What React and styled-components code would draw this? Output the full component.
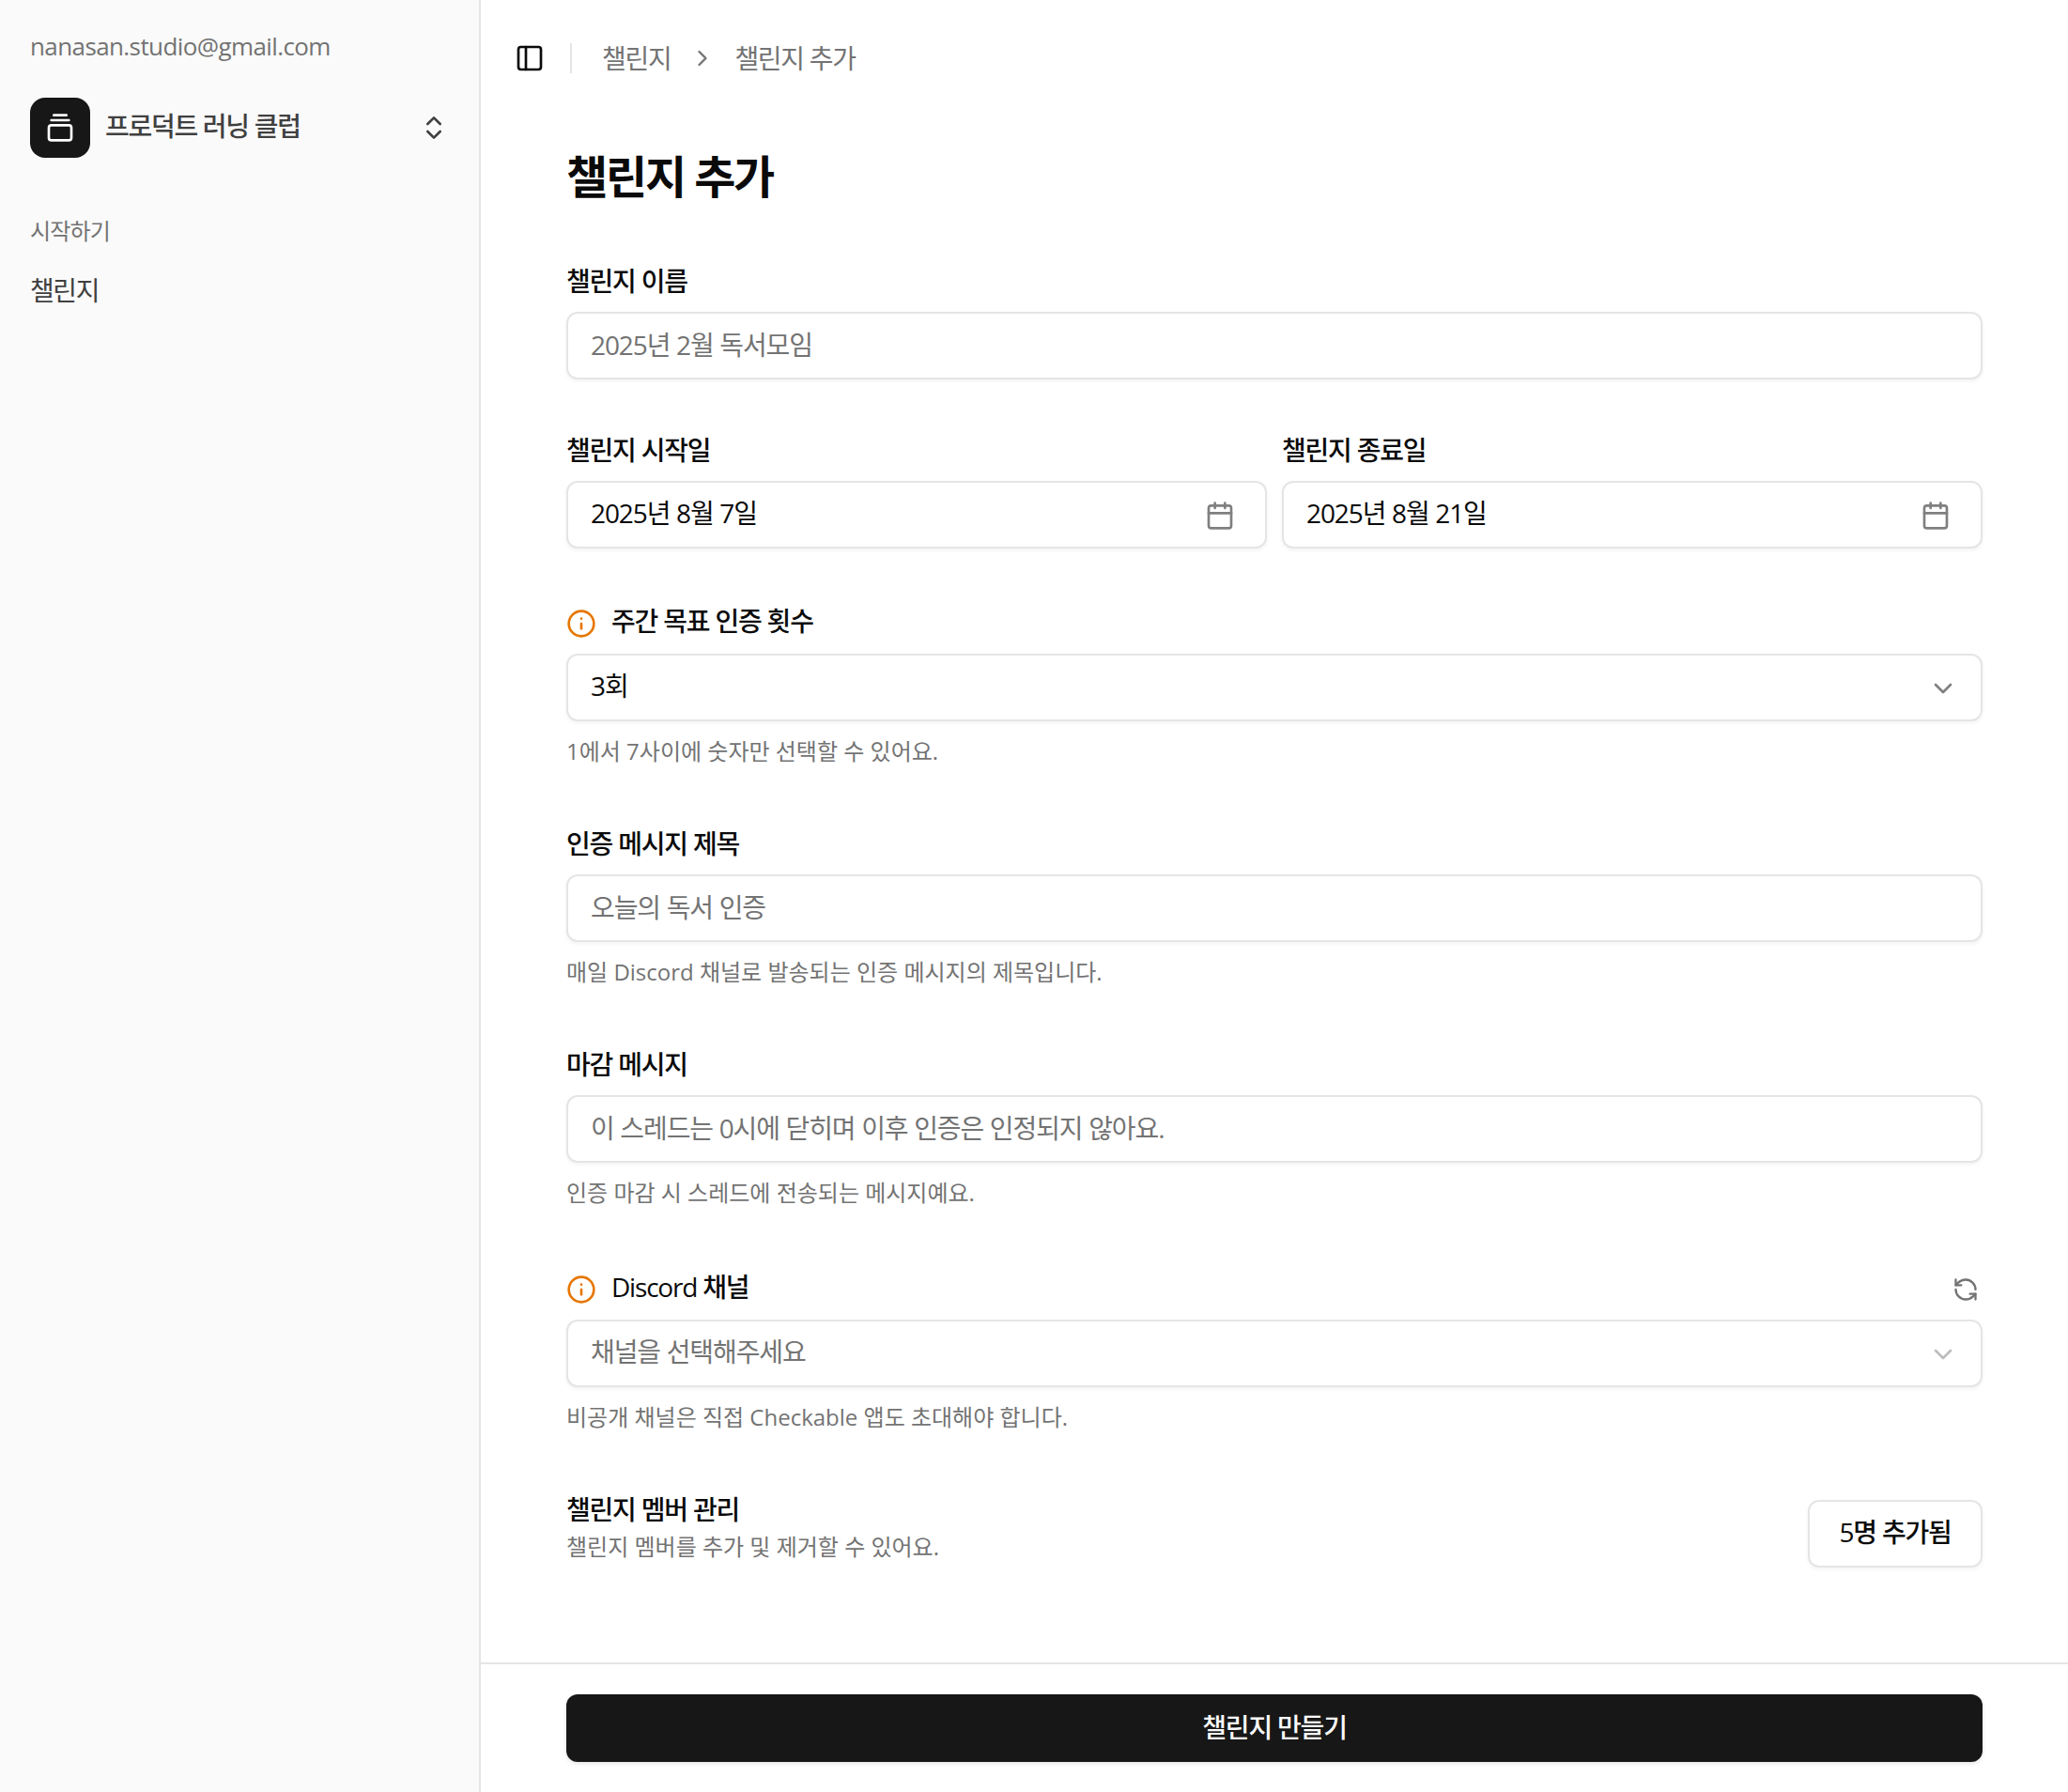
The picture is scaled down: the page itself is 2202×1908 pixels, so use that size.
import React from 'react'
import styled, { createGlobalStyle } from 'styled-components'
import { PanelLeft, ChevronRight, ChevronsUpDown, Calendar, Info, ChevronDown, RefreshCcw, GalleryVerticalEnd } from 'lucide-react'

const GlobalStyle = createGlobalStyle`
  * { box-sizing: border-box; }
  html, body { margin: 0; padding: 0; background: #fff; }
  body {
    font-family: "Open Sans", "Noto Sans CJK KR", sans-serif;
    color: #0a0a0a;
  }
  input, button { font-family: inherit; }
`

const Shell = styled.div`
  display: flex;
  height: 1908px;
  overflow: hidden;
`

const Sidebar = styled.aside`
  width: 512px;
  flex-shrink: 0;
  background: #fafafa;
  border-right: 2px solid #e5e5e5;
  padding: 31px 32px 32px;
`

const Email = styled.div`
  font-size: 26px;
  line-height: 36px;
  color: #737373;
  letter-spacing: -0.6px;
`

const Team = styled.div`
  display: flex;
  align-items: center;
  gap: 16px;
  margin-top: 37px;
  height: 64px;
`

const TeamLogo = styled.div`
  width: 64px;
  height: 64px;
  border-radius: 16px;
  background: #171717;
  color: #fff;
  display: flex;
  align-items: center;
  justify-content: center;
`

const TeamName = styled.div`
  flex: 1;
  font-size: 28px;
  line-height: 36px;
  font-weight: 500;
  letter-spacing: -1.3px;
  color: #404040;
  margin-top: -4px;
`

const TeamToggle = styled.div`
  display: flex;
  color: #404040;
`

const GroupLabel = styled.div`
  margin-top: 62px;
  font-size: 24px;
  line-height: 32px;
  letter-spacing: -0.8px;
  color: #737373;
`

const NavItem = styled.div`
  margin-top: 29px;
  font-size: 28px;
  line-height: 36px;
  letter-spacing: -1.4px;
  color: #404040;
`

const Main = styled.main`
  flex: 1;
  min-width: 0;
  display: flex;
  flex-direction: column;
`

const TopBar = styled.header`
  height: 124px;
  flex-shrink: 0;
  display: flex;
  align-items: center;
  padding-left: 36px;
`

const BarIcon = styled.div`
  display: flex;
  color: #0a0a0a;
`

const BarDivider = styled.div`
  width: 2px;
  height: 32px;
  background: #e5e5e5;
  margin: 0 32px 0 27px;
`

const Crumb = styled.span`
  font-size: 28px;
  letter-spacing: -1.3px;
  color: #737373;
  margin-top: -2px;
`

const CrumbSep = styled.span`
  display: flex;
  color: #737373;
  margin: 0 20px;
`

const Content = styled.div`
  flex: 1;
  padding: 36px 91px 0;
  display: flex;
  flex-direction: column;
`

const Title = styled.h1`
  margin: 0 0 66px;
  font-size: 48px;
  line-height: 56px;
  font-weight: 700;
  letter-spacing: -2.2px;
`

const Form = styled.div`
  display: flex;
  flex-direction: column;
  gap: 58px;
`

const Field = styled.div`
  display: flex;
  flex-direction: column;
  min-width: 0;
`

const DateRow = styled.div`
  display: grid;
  grid-template-columns: 1fr 1fr;
  gap: 16px;
`

const LabelRow = styled.div`
  display: flex;
  align-items: center;
  gap: 16px;
  height: ${(p) => (p.$hint ? '38px' : '34px')};
  margin-bottom: 16px;
  color: #e67700;
  svg { margin-top: 6px; }
`

const Label = styled.label`
  font-size: 28px;
  line-height: 32px;
  font-weight: 500;
  letter-spacing: -1.2px;
  color: #0a0a0a;
  flex: ${(p) => (p.$grow ? 1 : 'none')};
`

const Refresh = styled.span`
  display: flex;
  color: #737373;
  margin-right: 4px;
`

const TextInput = styled.input`
  width: 100%;
  height: 72px;
  border: 2px solid #e5e5e5;
  border-radius: 12px;
  background: #fff;
  box-shadow: 0 2px 4px rgba(0, 0, 0, 0.05);
  padding: 0 24px 2px;
  font-size: 28px;
  letter-spacing: -1.1px;
  word-spacing: 0.5px;
  color: #0a0a0a;
  outline: none;
  &::placeholder { color: #737373; opacity: 1; }
`

const PickerBox = styled.div`
  width: 100%;
  height: 72px;
  border: 2px solid #e5e5e5;
  border-radius: 12px;
  background: #fff;
  box-shadow: 0 2px 4px rgba(0, 0, 0, 0.05);
  padding: 0 24px;
  display: flex;
  align-items: center;
  justify-content: space-between;
  font-size: 28px;
  letter-spacing: -1.1px;
  word-spacing: 0.5px;
  color: ${(p) => (p.$empty ? '#737373' : '#0a0a0a')};
`

const PickerText = styled.span`
  margin-top: -6px;
`

const PickerIcon = styled.span`
  display: flex;
  color: ${(p) => (p.$faded ? '#bdbdbd' : '#808080')};
  margin-right: ${(p) => (p.$inset ? '8px' : '0')};
  margin-top: 2px;
`

const Help = styled.p`
  margin: 16px 0 0;
  padding-bottom: 7px;
  font-size: 24px;
  line-height: 32px;
  letter-spacing: 0;
  color: #737373;
`

const MemberRow = styled.div`
  display: flex;
  align-items: flex-start;
  justify-content: space-between;
  margin-top: 1px;
`

const MemberText = styled.div`
  display: flex;
  flex-direction: column;
  gap: 8px;
`

const MemberHelp = styled(Help)`
  margin: 0;
  padding: 0;
`

const OutlineButton = styled.button`
  height: 72px;
  width: 186px;
  margin-top: 6px;
  border: 2px solid #e5e5e5;
  border-radius: 12px;
  background: #fff;
  box-shadow: 0 2px 4px rgba(0, 0, 0, 0.05);
  font-size: 28px;
  font-weight: 500;
  letter-spacing: -1.2px;
  color: #0a0a0a;
  padding: 0 0 6px;
`

const Footer = styled.footer`
  flex-shrink: 0;
  border-top: 2px solid #e5e5e5;
  padding: 32px 91px;
`

const SubmitButton = styled.button`
  display: block;
  width: 100%;
  height: 72px;
  border: none;
  border-radius: 12px;
  background: #171717;
  box-shadow: 0 2px 4px rgba(0, 0, 0, 0.1);
  color: #fafafa;
  font-size: 28px;
  font-weight: 500;
  letter-spacing: -1.2px;
  padding: 0 0 4px;
`

function Picker({ value, icon: Icon, empty, faded, inset }) {
  return (
    <PickerBox $empty={empty}>
      <PickerText>{value}</PickerText>
      <PickerIcon $faded={faded} $inset={inset}>
        <Icon size={32} />
      </PickerIcon>
    </PickerBox>
  )
}

export default function App() {
  return (
    <Shell>
      <GlobalStyle />
      <Sidebar>
        <Email>nanasan.studio@gmail.com</Email>
        <Team>
          <TeamLogo>
            <GalleryVerticalEnd size={32} />
          </TeamLogo>
          <TeamName>프로덕트 러닝 클럽</TeamName>
          <TeamToggle>
            <ChevronsUpDown size={32} />
          </TeamToggle>
        </Team>
        <GroupLabel>시작하기</GroupLabel>
        <NavItem>챌린지</NavItem>
      </Sidebar>
      <Main>
        <TopBar>
          <BarIcon>
            <PanelLeft size={32} />
          </BarIcon>
          <BarDivider />
          <Crumb>챌린지</Crumb>
          <CrumbSep>
            <ChevronRight size={28} />
          </CrumbSep>
          <Crumb>챌린지 추가</Crumb>
        </TopBar>
        <Content>
          <Title>챌린지 추가</Title>
          <Form>
            <Field>
              <LabelRow>
                <Label>챌린지 이름</Label>
              </LabelRow>
              <TextInput placeholder="2025년 2월 독서모임" />
            </Field>
            <DateRow>
              <Field>
                <LabelRow>
                  <Label>챌린지 시작일</Label>
                </LabelRow>
                <Picker value="2025년 8월 7일" icon={Calendar} inset />
              </Field>
              <Field>
                <LabelRow>
                  <Label>챌린지 종료일</Label>
                </LabelRow>
                <Picker value="2025년 8월 21일" icon={Calendar} inset />
              </Field>
            </DateRow>
            <Field>
              <LabelRow $hint>
                <Info size={32} />
                <Label>주간 목표 인증 횟수</Label>
              </LabelRow>
              <Picker value="3회" icon={ChevronDown} />
              <Help>1에서 7사이에 숫자만 선택할 수 있어요.</Help>
            </Field>
            <Field>
              <LabelRow>
                <Label>인증 메시지 제목</Label>
              </LabelRow>
              <TextInput placeholder="오늘의 독서 인증" />
              <Help>매일 Discord 채널로 발송되는 인증 메시지의 제목입니다.</Help>
            </Field>
            <Field>
              <LabelRow>
                <Label>마감 메시지</Label>
              </LabelRow>
              <TextInput placeholder="이 스레드는 0시에 닫히며 이후 인증은 인정되지 않아요." />
              <Help>인증 마감 시 스레드에 전송되는 메시지예요.</Help>
            </Field>
            <Field>
              <LabelRow $hint>
                <Info size={32} />
                <Label $grow>Discord 채널</Label>
                <Refresh>
                  <RefreshCcw size={28} />
                </Refresh>
              </LabelRow>
              <Picker value="채널을 선택해주세요" icon={ChevronDown} empty faded />
              <Help>비공개 채널은 직접 Checkable 앱도 초대해야 합니다.</Help>
            </Field>
            <MemberRow>
              <MemberText>
                <Label>챌린지 멤버 관리</Label>
                <MemberHelp>챌린지 멤버를 추가 및 제거할 수 있어요.</MemberHelp>
              </MemberText>
              <OutlineButton>5명 추가됨</OutlineButton>
            </MemberRow>
          </Form>
        </Content>
        <Footer>
          <SubmitButton>챌린지 만들기</SubmitButton>
        </Footer>
      </Main>
    </Shell>
  )
}
